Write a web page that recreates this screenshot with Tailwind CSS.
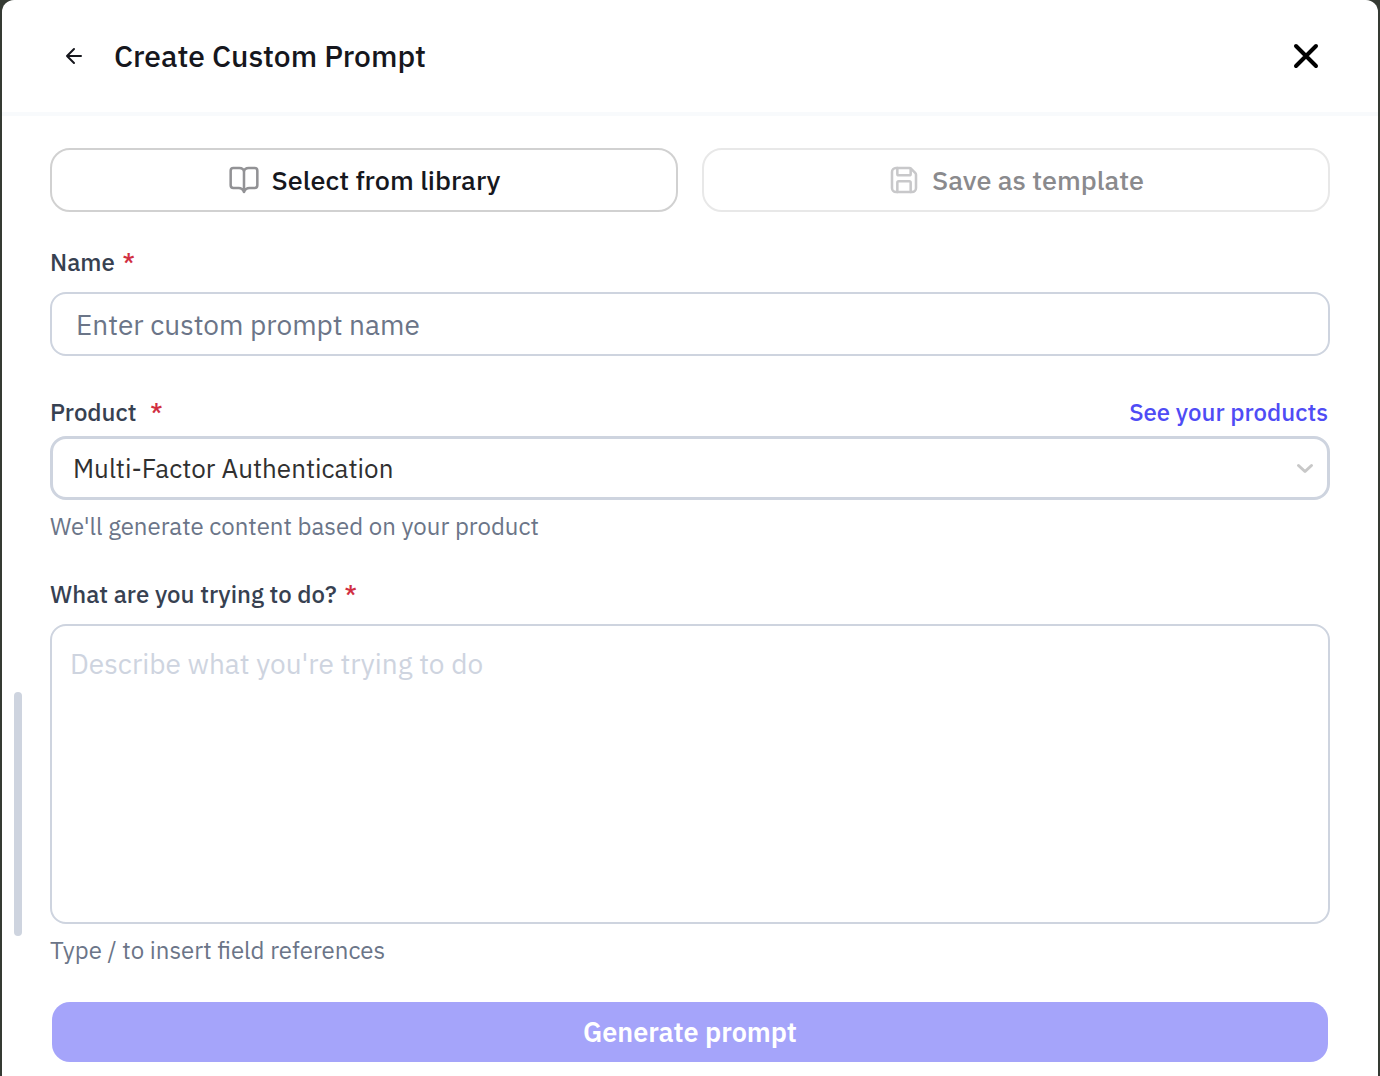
<!DOCTYPE html>
<html lang="en">
<head>
<meta charset="utf-8">
<meta name="viewport" content="width=device-width, initial-scale=1">
<title>Create Custom Prompt</title>
<script src="https://cdn.jsdelivr.net/npm/@tailwindcss/browser@4"></script>
</head>
<body class="min-h-screen bg-[#353a33] px-0.5 font-['IBM_Plex_Sans','Noto_Sans',sans-serif] text-[#16171d]">
<main class="relative flex min-h-screen flex-col rounded-t-xl bg-white">
  <header class="flex items-center border-b-4 border-[#f8fafc] px-14 pt-8 pb-8">
    <button type="button" aria-label="Back" class="flex h-12 w-8 items-center justify-center">
      <svg class="size-6" viewBox="0 0 24 24" fill="none" stroke="currentColor" stroke-width="2" stroke-linecap="round" stroke-linejoin="round"><path d="M19 12H5M12 5l-7 7 7 7"/></svg>
    </button>
    <h1 class="ml-6 flex-1 text-3xl leading-12 font-medium">Create Custom Prompt</h1>
    <button type="button" aria-label="Close" class="flex h-12 w-8 items-center justify-center text-black">
      <svg class="size-8" viewBox="0 0 32 32" fill="none" stroke="currentColor" stroke-width="4" stroke-linecap="round"><path d="M6 6l20 20M26 6L6 26"/></svg>
    </button>
  </header>
  <form class="flex flex-col px-12 pt-8 pb-3.5">
    <div class="grid grid-cols-2 gap-6">
      <button type="button" class="flex h-16 items-center justify-center gap-3 rounded-[20px] border-2 border-[#d1d1d1] text-[27px] font-medium">
        <svg class="size-8 text-[#929295]" viewBox="0 0 24 24" fill="none" stroke="currentColor" stroke-width="1.900" stroke-linecap="round" stroke-linejoin="round"><path d="M12 6v15M4 18a2 2 0 0 1-2-2V5a2 2 0 0 1 2-2h4.500c2 0 3.500 1 3.500 3 0-2 1.500-3 3.500-3H20a2 2 0 0 1 2 2v11a2 2 0 0 1-2 2h-4c-2 0-3 .5-4 3-1-2.500-2-3-4-3z"/></svg>
        Select from library
      </button>
      <button type="button" disabled class="flex h-16 items-center justify-center gap-3 rounded-[20px] border-2 border-[#e8e8e8] text-[27px] font-medium text-[#8a8a8d]">
        <svg class="size-8 text-[#c8c8ca]" viewBox="0 0 24 24" fill="none" stroke="currentColor" stroke-width="1.900" stroke-linecap="round" stroke-linejoin="round"><path d="M16 3a2 2 0 0 1 1.400.6l3 3a2 2 0 0 1 .6 1.400V18a3 3 0 0 1-3 3H6a3 3 0 0 1-3-3V6a3 3 0 0 1 3-3z"/><path d="M17 21v-7a1 1 0 0 0-1-1H8a1 1 0 0 0-1 1v7M7 3v4.500a1 1 0 0 0 1 1h8a1 1 0 0 0 1-1V3.500"/></svg>
        Save as template
      </button>
    </div>

    <label for="name" class="mt-8.5 mb-3.5 text-2xl font-medium text-[#374151]">Name <span class="ml-0.5 text-[#d12f42]">*</span></label>
    <input id="name" type="text" placeholder="Enter custom prompt name" class="h-16 w-full rounded-2xl border-2 border-[#ced4df] px-6 text-[28px] placeholder:text-[#6b7588]">

    <div class="mt-10 mb-2 flex justify-between text-2xl font-medium">
      <label for="product" class="text-[#374151]">Product <span class="ml-2 text-[#d12f42]">*</span></label>
      <a href="#" class="mr-0.5 text-[#4f4cf5]">See your products</a>
    </div>
    <div class="relative">
      <select id="product" class="h-16 w-full appearance-none rounded-2xl border-3 border-[#ced4df] bg-white px-5 text-[26px] text-[#303030]">
        <option>Multi-Factor Authentication</option>
      </select>
      <svg class="pointer-events-none absolute top-5 right-3 size-6 text-[#c8c8c8]" viewBox="0 0 24 24" fill="none" stroke="currentColor" stroke-width="3" stroke-linecap="round" stroke-linejoin="round"><path d="M4.500 9.500l6.500 6 6.500-6"/></svg>
    </div>
    <p class="mt-2.5 text-2xl text-[#6b7588]">We'll generate content based on your product</p>

    <label for="goal" class="mt-9 mb-3.5 text-2xl font-medium text-[#374151]">What are you trying to do? <span class="ml-0.5 text-[#d12f42]">*</span></label>
    <textarea id="goal" placeholder="Describe what you're trying to do" class="h-75 w-full resize-none rounded-2xl border-2 border-[#ced4df] px-4.5 py-5 text-[28px] leading-9 placeholder:text-[#ced4df]"></textarea>
    <p class="mt-2.5 text-2xl text-[#6b7588]">Type / to insert field references</p>

    <button type="submit" disabled class="mx-0.5 mt-9 h-15 rounded-[18px] bg-[#a5a4fa] text-[27px] font-semibold text-white">Generate prompt</button>
  </form>
  <div aria-hidden="true" class="absolute top-173 left-3 h-61 w-2 rounded-full bg-[#ced4df]"></div>
</main>
</body>
</html>
